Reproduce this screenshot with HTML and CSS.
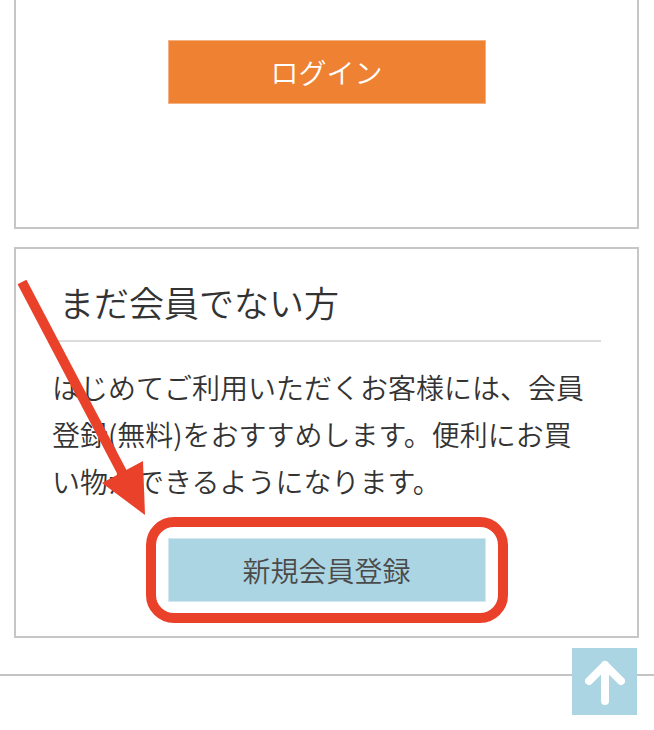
FILE: index.html
```html
<!DOCTYPE html>
<html lang="ja">
<head>
<meta charset="utf-8">
<title>会員登録</title>
<link rel="stylesheet" href="styles.css">
</head>
<body>
<div class="page">
  <section class="card card-login">
    <a class="btn btn-login" href="#">ログイン</a>
  </section>
  <section class="card card-register">
    <h2 class="card-title">まだ会員でない方</h2>
    <p class="card-text">はじめてご利用いただくお客様には、会員登録(無料)をおすすめします。便利にお買い物ができるようになります。</p>
    <div class="btn-wrap">
      <a class="btn btn-register" href="#">新規会員登録</a>
      <span class="highlight"></span>
    </div>
  </section>
  <footer class="footer"></footer>
</div>
<a class="pagetop" href="#" aria-label="ページトップへ">
  <svg width="40" height="46" viewBox="0 0 40 46"><path d="M20 42 V6 M4 22 L20 6 L36 22" fill="none" stroke="#fff" stroke-width="8" stroke-linecap="round" stroke-linejoin="round"/></svg>
</a>
<svg class="annotation-arrow" width="654" height="730" viewBox="0 0 654 730">
  <line x1="22" y1="282" x2="124" y2="476" stroke="#e9412a" stroke-width="10"/>
  <polygon points="145,515 102,483 143,461" fill="#e9412a"/>
</svg>
</body>
</html>
```
FILE: styles.css
```css
html, body {
  margin: 0;
  padding: 0;
  background: #fff;
}
body {
  position: relative;
  width: 654px;
  height: 730px;
  overflow: hidden;
  font-family: "Noto Sans CJK JP", "Noto Sans", sans-serif;
  color: #333;
}
.page {
  padding: 0 15px 0 14px;
}
.card {
  border: 2px solid #c6c6c6;
  background: #fff;
}
.card-login {
  border-top: 0;
  padding: 40px 0 123px;
}
.card-register {
  margin-top: 18px;
  padding: 29px 36px 34px;
}
.btn {
  display: flex;
  align-items: center;
  justify-content: center;
  box-sizing: border-box;
  width: 318px;
  height: 64px;
  margin: 0 auto;
  font-size: 28px;
  font-weight: 350;
  text-decoration: none;
}
.btn-login {
  background: #ee8232;
  border: 1px solid #f4b283;
  color: #fff;
}
.btn-register {
  background: #acd5e3;
  border: 1px solid #d2e9f1;
  color: #4a4a4a;
}
.card-title {
  margin: 0;
  padding: 0 0 14px 7px;
  font-size: 35px;
  line-height: 48px;
  font-weight: 350;
  border-bottom: 2px solid #dcdcdc;
}
.card-text {
  margin: 22px 0 0;
  padding-right: 6px;
  font-size: 28px;
  line-height: 47px;
  font-weight: 350;
}
.btn-wrap {
  position: relative;
  width: 318px;
  margin: 33px auto 0;
}
.highlight {
  position: absolute;
  top: -21px;
  bottom: -21px;
  left: -22px;
  right: -22px;
  box-sizing: border-box;
  border: 10px solid #e9412a;
  border-radius: 28px;
  pointer-events: none;
}
.footer {
  margin: 36px -15px 0 -14px;
  height: 54px;
  border-top: 2px solid #c4c4c4;
}
.pagetop {
  position: absolute;
  left: 572px;
  top: 648px;
  width: 65px;
  height: 67px;
  background: #acd5e3;
  display: flex;
  align-items: center;
  justify-content: center;
}
.annotation-arrow {
  position: absolute;
  left: 0;
  top: 0;
  pointer-events: none;
}
```
